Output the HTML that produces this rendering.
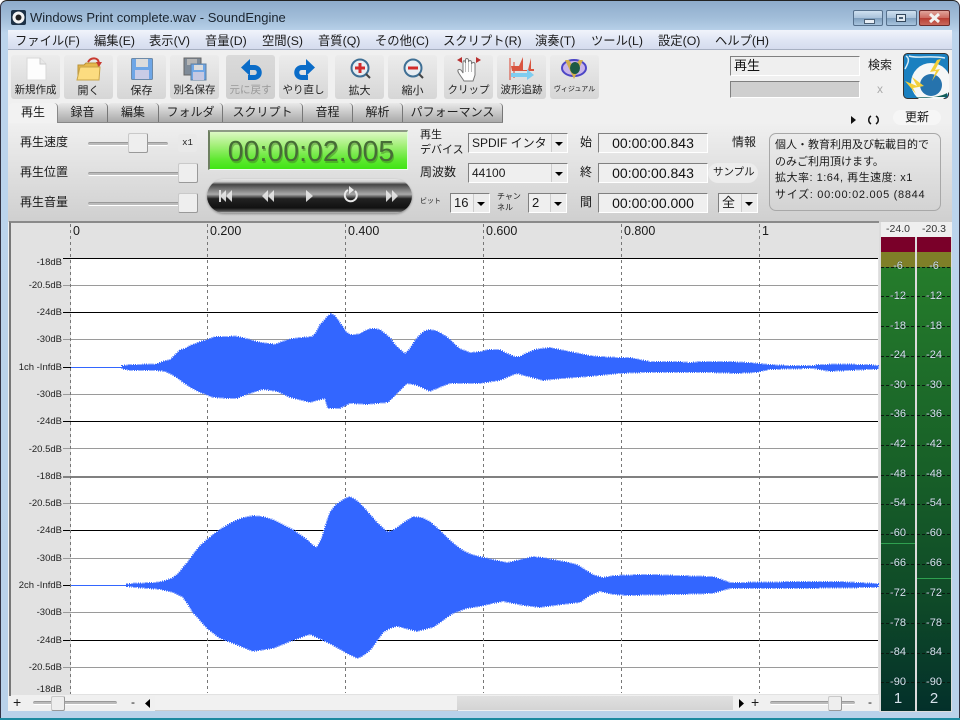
<!DOCTYPE html>
<html lang="ja"><head><meta charset="utf-8"><title>SoundEngine</title>
<style>
html,body{margin:0;padding:0;background:#fff}
#w{position:relative;width:960px;height:720px;overflow:hidden;font-family:"Liberation Sans","Noto Sans CJK JP",sans-serif;color:#1a1a1a;font-size:12px}
#w div,#w span.t{position:absolute}
.t{position:absolute;white-space:nowrap;line-height:16px;height:16px}
.mn{top:33px;font-size:12.3px}
.btn{top:55px;width:49px;height:44px;border-radius:3px;background:linear-gradient(#ececec,#d6d6d6)}
.lb{top:82px;text-align:center;font-size:10.5px;color:#222}
.tab{top:103px;height:19px;border-radius:4px 4px 0 0;background:linear-gradient(#e9e9e9,#a9a9a9);border-right:1px solid #777;box-sizing:border-box;text-align:center;line-height:19px;color:#222}
.sl{height:2px;background:#bbb;border-bottom:1px solid #fff;border-top:1px solid #999;border-radius:2px}
.th{background:#eee;border:1px solid #c9c9c9;border-right-color:#999;border-bottom-color:#999;border-radius:2px;box-sizing:border-box}
.sel{background:#efefef;border:1px solid;border-color:#808080 #fff #fff #808080;box-sizing:border-box;line-height:18px;padding-left:3px;white-space:nowrap;overflow:hidden}
.ar{right:0;top:0;bottom:0;width:15px;background:#ececec;border-left:1px solid #ccc}
.ar:after{content:"";position:absolute;left:3px;top:8px;border:4px solid transparent;border-top:4px solid #000;border-bottom:0}
.tm{left:598px;width:110px;height:20px;background:#efefef;border:1px solid;border-color:#808080 #fff #fff #808080;box-sizing:border-box;text-align:center;font-size:14px;line-height:18px;color:#111}
.db{left:10px;width:52px;text-align:right;font-size:9.5px;color:#222}
.m{width:36px;text-align:center;font-size:11px;color:#d5e5ea;text-shadow:0 0 1px #123}
</style></head><body>
<div id="w">
<div style="left:0;top:0;width:960px;height:720px;border-radius:7px 7px 0 0;background:linear-gradient(#8eabcb 0,#a3bfda 18px,#bcd4ec 32px,#b9d2ea 100%);border-top:1px solid #222;border-left:1px solid #334;border-right:1px solid #334;box-sizing:border-box"></div>
<div style="left:0;top:718px;width:960px;height:2px;background:#1d8aa0"></div>
<svg style="position:absolute;left:11px;top:10px" width="15" height="15" viewBox="0 0 15 15"><rect x="0" y="0" width="15" height="15" rx="2" fill="#1c3146"/><circle cx="7.5" cy="7.5" r="6" fill="#f3f3f3"/><circle cx="7.5" cy="7.5" r="3" fill="#222"/></svg>
<span class="t" style="left:30px;top:10px;font-size:13px;color:#1b2530">Windows Print complete.wav - SoundEngine</span>
<div style="left:853px;top:10px;width:30px;height:16px;border:1px solid #56708c;box-sizing:border-box;border-radius:2px;background:linear-gradient(#cfe0f0 0,#a9c2da 50%,#7f9fbe 51%,#a8c4de 100%)"></div>
<div style="left:864px;top:19px;width:9px;height:3px;background:#e8eef5;border:1px solid #4a5f75"></div>
<div style="left:886px;top:10px;width:31px;height:16px;border:1px solid #56708c;box-sizing:border-box;border-radius:2px;background:linear-gradient(#cfe0f0 0,#a9c2da 50%,#7f9fbe 51%,#a8c4de 100%)"></div>
<div style="left:896px;top:14px;width:10px;height:8px;border:1px solid #33475c;background:#dfe8f0;box-sizing:border-box"></div>
<div style="left:899px;top:17px;width:4px;height:2px;background:#4a5f75"></div>
<div style="left:919px;top:10px;width:31px;height:16px;border:1px solid #6d2b2b;box-sizing:border-box;border-radius:2px;background:linear-gradient(#e0a49c 0,#cc6a60 50%,#b83d33 51%,#c9685c 100%)"></div>
<svg style="position:absolute;left:928px;top:13px" width="13" height="10" viewBox="0 0 13 10"><path d="M2 1L11 9M11 1L2 9" stroke="#f2f2f2" stroke-width="3"/></svg>

<div style="left:8px;top:30px;width:944px;height:681px;background:#f0f0f0"></div>
<div style="left:8px;top:30px;width:944px;height:20px;background:linear-gradient(#f1f4fb,#dfe5f4 55%,#d5dcee);border-bottom:1px solid #a7b0c2;box-sizing:border-box"></div>
<span class="t mn" style="left:15px">ファイル(F)</span>
<span class="t mn" style="left:94px">編集(E)</span>
<span class="t mn" style="left:149px">表示(V)</span>
<span class="t mn" style="left:205px">音量(D)</span>
<span class="t mn" style="left:262px">空間(S)</span>
<span class="t mn" style="left:318px">音質(Q)</span>
<span class="t mn" style="left:375px">その他(C)</span>
<span class="t mn" style="left:443px">スクリプト(R)</span>
<span class="t mn" style="left:535px">演奏(T)</span>
<span class="t mn" style="left:591px">ツール(L)</span>
<span class="t mn" style="left:658px">設定(O)</span>
<span class="t mn" style="left:715px">ヘルプ(H)</span>

<div class="btn" style="left:11px"></div><div class="btn" style="left:64px"></div><div class="btn" style="left:117px"></div><div class="btn" style="left:170px"></div>
<div class="btn" style="left:226px;background:linear-gradient(#dadada,#cfcfcf)"></div><div class="btn" style="left:279px"></div><div class="btn" style="left:335px"></div><div class="btn" style="left:388px"></div><div class="btn" style="left:444px"></div><div class="btn" style="left:497px"></div><div class="btn" style="left:550px"></div>

<svg style="position:absolute;left:0;top:50px" width="620" height="50" viewBox="0 50 620 50">
<path d="M27 58H40L46 64V80H27Z" fill="#fdfdfd" stroke="#d8d8d8"/><path d="M40 58V64H46" fill="#e8e8e8" stroke="#ccc"/>
<path d="M78 80V65H84L86 63H98V80Z" fill="#e6b84c" stroke="#b89238"/><path d="M77 80L80 67H100L99 80Z" fill="#fcdc80" stroke="#c9a448"/><path d="M88 62C91 57 98 57 99 63" fill="none" stroke="#c83a30" stroke-width="2"/><path d="M96 62L102 62L99 67Z" fill="#c83a30"/>
<rect x="131.500" y="58.500" width="21" height="21" rx="1" fill="#6ea6e6" stroke="#6d8aa8"/><rect x="136" y="59" width="12" height="8" fill="#dcdcdc"/><rect x="135" y="70" width="14" height="9" fill="#c9cce6"/>
<rect x="184" y="58" width="17" height="17" fill="#7f8b98" stroke="#666"/><rect x="187" y="59" width="10" height="6" fill="#b5b5b5"/>
<rect x="191" y="64" width="15" height="16" fill="#6ea6e6" stroke="#5f7f9f"/><rect x="194" y="65" width="9" height="5" fill="#dcdcdc"/><rect x="193" y="72" width="11" height="8" fill="#c5c8e2"/>
<path d="M249 67.500H254C261 67.500 261 77.500 254 77.500H248" fill="none" stroke="#0a6cc8" stroke-width="5"/><path d="M250 59L241 67.500L250 76Z" fill="#0a6cc8"/>
<path d="M307 67.500H302C295 67.500 295 77.500 302 77.500H308" fill="none" stroke="#0a6cc8" stroke-width="5"/><path d="M306 59L315 67.500L306 76Z" fill="#0a6cc8"/>
<circle cx="360" cy="68" r="8.5" fill="#e8edf2" stroke="#3f6f94" stroke-width="2"/><path d="M355 68H365M360 63V73" stroke="#d22a2a" stroke-width="3"/><path d="M366 74L370 78" stroke="#444" stroke-width="2"/>
<circle cx="413" cy="68" r="8.5" fill="#e8edf2" stroke="#3f6f94" stroke-width="2"/><path d="M408 68H418" stroke="#d22a2a" stroke-width="3"/><path d="M419 74L423 78" stroke="#444" stroke-width="2"/>
<path d="M464 81C461 76 457 72 458 70C460 68 462 71 463 73V63C463 60 465 60 465.500 63V60C465.500 58 468 58 468.500 60V62C469 60 471 60 471.500 62V64C472 62 475 62 475 64V75L473 81Z" fill="#fdfdfd" stroke="#777"/>
<path d="M465.500 63V72M468.500 62V72M471.500 64V72" stroke="#bbb"/>
<path d="M457 60L462 57V63ZM481 60L476 57V63Z" fill="#b83030"/>
<path d="M510 58V80M514 62V78" stroke="#d9432f"/><path d="M511 66H519L523 57V70H528L531 58V69H534V71H512Z" fill="#d9543f"/><path d="M511 73H527V69L534 75L527 80V77H511Z" fill="#7fcdf0"/>
<ellipse cx="574" cy="68" rx="12" ry="8" fill="#c9b5e8" stroke="#4c46c6" stroke-width="2"/><path d="M565 60L574 79L583 60L579 60L574 68L569 60Z" fill="#d2b04c"/><ellipse cx="575" cy="68" rx="5" ry="6" fill="#1c5a44"/>
</svg>
<span class="t lb" style="left:11px;width:49px">新規作成</span>
<span class="t lb" style="left:64px;width:49px;font-size:11px;top:83px">開く</span>
<span class="t lb" style="left:117px;width:49px;font-size:11px;top:83px">保存</span>
<span class="t lb" style="left:170px;width:49px">別名保存</span>
<span class="t lb" style="left:226px;width:49px;color:#999">元に戻す</span>
<span class="t lb" style="left:279px;width:49px">やり直し</span>
<span class="t lb" style="left:335px;width:49px;font-size:11px;top:83px">拡大</span>
<span class="t lb" style="left:388px;width:49px;font-size:11px;top:83px">縮小</span>
<span class="t lb" style="left:444px;width:49px">クリップ</span>
<span class="t lb" style="left:497px;width:49px">波形追跡</span>
<span class="t lb" style="left:550px;width:49px;font-size:7px">ヴィジュアル</span>

<div class="sel" style="left:730px;top:56px;width:130px;height:20px;font-size:13px;color:#111">再生</div>
<span class="t" style="left:868px;top:57px">検索</span>
<div class="sel" style="left:730px;top:81px;width:130px;height:17px;background:#cfcfcf"></div>
<span class="t" style="left:877px;top:81px;color:#aaa">x</span>
<svg style="position:absolute;left:903px;top:53px" width="46" height="46" viewBox="0 0 46 46"><rect x=".5" y=".5" width="45" height="45" rx="4" fill="#1a80c0" stroke="#333"/><path d="M3 3C8 6 4 12 2 16M6 3C14 6 26 2 42 5" fill="none" stroke="#d8ecf5" stroke-width="1.500"/><circle cx="28" cy="30" r="20" fill="#f5f7f7"/><path d="M2 34L45 34V45H2Z" fill="#1a80c0" opacity=".0"/><circle cx="28" cy="32" r="11" fill="#2673ad"/><path d="M12 44H44V40C38 44 20 46 12 44Z" fill="#14605a"/><path d="M38 6L32 17L37 16L29 28L33 18L27 19L34 7Z" fill="#f3cf3a"/><path d="M2 28L14 33L9 24L21 33L10 35L13 41Z" fill="#f3cf3a"/></svg>

<div class="tab" style="left:58px;width:50px">録音</div>
<div class="tab" style="left:108px;width:51px">編集</div>
<div class="tab" style="left:159px;width:64px">フォルダ</div>
<div class="tab" style="left:223px;width:80px">スクリプト</div>
<div class="tab" style="left:303px;width:50px">音程</div>
<div class="tab" style="left:353px;width:50px">解析</div>
<div class="tab" style="left:403px;width:100px">パフォーマンス</div>

<div style="left:8px;top:122px;width:944px;height:100px;background:linear-gradient(#f0f0f0,#cfcfcf)"></div>
<div style="left:9px;top:103px;width:49px;height:20px;border-radius:4px 4px 0 0;background:#f2f2f2;border-right:1px solid #888;box-sizing:border-box;text-align:center;line-height:19px">再生</div>
<div style="left:58px;top:122px;width:445px;height:1px;background:#888"></div>
<svg style="position:absolute;left:849px;top:114px" width="30" height="11"><path d="M2 2L7 6L2 10Z" fill="#111"/><path d="M22 2C19 4 19 8 22 10M27 2C30 4 30 8 27 10" fill="none" stroke="#111" stroke-width="1.5"/></svg>
<div style="left:893px;top:110px;width:48px;height:15px;border-radius:8px;background:#f6f6f6"></div>
<span class="t" style="left:905px;top:109px;font-size:12px">更新</span>

<span class="t" style="left:20px;top:134px">再生速度</span>
<span class="t" style="left:20px;top:164px">再生位置</span>
<span class="t" style="left:20px;top:194px">再生音量</span>
<div class="sl" style="left:88px;top:142px;width:80px"></div><div class="th" style="left:128px;top:133px;width:20px;height:20px"></div>
<div class="sl" style="left:88px;top:172px;width:92px"></div><div class="th" style="left:178px;top:163px;width:20px;height:20px"></div>
<div class="sl" style="left:88px;top:202px;width:92px"></div><div class="th" style="left:178px;top:193px;width:20px;height:20px"></div>
<div style="left:178px;top:134px;width:19px;height:18px;background:#e9e9e9;border-radius:3px"></div>
<span class="t" style="left:178px;width:19px;text-align:center;top:135px;font:9px/16px 'Liberation Mono',monospace">x1</span>

<div style="left:208px;top:130px;width:200px;height:40px;box-sizing:border-box;border-top:2px solid #8d9a85;border-left:2px solid #6d7f60;border-right:1px solid #dfd;border-bottom:1px solid #efe;background:linear-gradient(#dcf8c4 0,#a6f07c 35%,#5ee830 75%,#3fe514 100%)"></div>
<span class="t" style="left:211px;width:200px;text-align:center;top:136px;height:32px;line-height:32px;font-size:28.5px;color:#466c36;text-shadow:1px 2px 0 rgba(60,120,30,.45)">00:00:02.005</span>

<div style="left:207px;top:179px;width:205px;height:34px;border-radius:17px;box-shadow:0 1px 2px #888;background:linear-gradient(#e8e8e8 0,#ccc 8%,#444 16%,#777 30%,#aaa 45%,#222 58%,#111 85%,#555 95%,#ccc 100%)"></div>
<svg style="position:absolute;left:207px;top:179px" width="205" height="34" viewBox="207 179 205 34">
<g fill="#e8e8e8" opacity=".9"><path d="M219 190H221V202H219ZM232 190V202L226 196ZM226 190V202L220 196Z"/><path d="M274 190V202L268 196ZM268 190V202L262 196Z"/><path d="M306 190L313 196L306 202Z"/><path d="M386 190L392 196L386 202ZM392 190L398 196L392 202Z"/></g>
<path d="M348 190A6 6 0 1 0 355 191" fill="none" stroke="#e8e8e8" stroke-width="2"/><path d="M349 186V194L354 190Z" fill="#e8e8e8"/>
</svg>

<span class="t" style="left:420px;top:127px;font-size:11px">再生</span>
<span class="t" style="left:420px;top:142px;font-size:11px">デバイス</span>
<span class="t" style="left:420px;top:164px;font-size:12px">周波数</span>
<span class="t" style="left:420px;top:194px;font-size:7px">ビット</span>
<span class="t" style="left:497px;top:189px;font-size:8px">チャン</span>
<span class="t" style="left:497px;top:200px;font-size:8px">ネル</span>
<div class="sel" style="left:468px;top:133px;width:100px;height:20px;font-size:12px">SPDIF インタ<div class="ar"></div></div>
<div class="sel" style="left:468px;top:163px;width:100px;height:20px;font-size:12px">44100<div class="ar"></div></div>
<div class="sel" style="left:450px;top:193px;width:40px;height:20px;font-size:13px">16<div class="ar"></div></div>
<div class="sel" style="left:528px;top:193px;width:39px;height:20px;font-size:13px">2<div class="ar"></div></div>
<span class="t" style="left:580px;top:134px">始</span>
<span class="t" style="left:580px;top:164px">終</span>
<span class="t" style="left:580px;top:194px">間</span>
<div class="tm" style="top:133px">00:00:00.843</div>
<div class="tm" style="top:163px">00:00:00.843</div>
<div class="tm" style="top:193px">00:00:00.000</div>
<span class="t" style="left:732px;top:134px">情報</span>
<div style="left:708px;top:163px;width:50px;height:20px;border-radius:10px;background:#ececec"></div>
<span class="t" style="left:713px;top:164px;font-size:10.5px">サンプル</span>
<div class="sel" style="left:718px;top:193px;width:40px;height:20px;font-size:13px">全<div class="ar"></div></div>
<div style="left:769px;top:133px;width:172px;height:78px;border:1px solid #a8a8a8;border-radius:7px;box-sizing:border-box"></div>
<span class="t" style="left:775px;top:137px;font-size:11px">個人・教育利用及び転載目的で</span>
<span class="t" style="left:775px;top:154px;font-size:11px">のみご利用頂けます。</span>
<span class="t" style="left:775px;top:170px;font-size:11px;letter-spacing:.5px">拡大率: 1:64, 再生速度: x1</span>
<span class="t" style="left:775px;top:187px;font-size:11px;letter-spacing:.7px">サイズ: 00:00:02.005 (8844</span>

<div style="left:9px;top:221px;width:870px;height:475px;background:#e2e2e2;border-left:2px solid #777;border-top:2px solid #8a8a8a;box-sizing:border-box"></div>

<svg style="position:absolute;left:0;top:0" width="960" height="720" viewBox="0 0 960 720">
<rect x="71" y="258" width="807" height="436" fill="#fff"/>
<g fill="#000" shape-rendering="crispEdges"><rect x="63" y="258" width="815" height="1"/><rect x="63" y="312" width="815" height="1"/><rect x="63" y="421" width="815" height="1"/><rect x="63" y="530" width="815" height="1"/><rect x="63" y="640" width="815" height="1"/><rect x="63" y="367" width="8" height="1"/><rect x="63" y="585" width="8" height="1"/></g>
<g fill="#9a9a9a" shape-rendering="crispEdges"><rect x="63" y="285" width="815" height="1"/><rect x="63" y="339" width="815" height="1"/><rect x="63" y="394" width="815" height="1"/><rect x="63" y="448" width="815" height="1"/><rect x="63" y="503" width="815" height="1"/><rect x="63" y="558" width="815" height="1"/><rect x="63" y="612" width="815" height="1"/><rect x="63" y="667" width="815" height="1"/></g>
<rect x="63" y="476" width="815" height="2" fill="#808080" shape-rendering="crispEdges"/>
<g stroke="#777" stroke-dasharray="3 3" shape-rendering="crispEdges"><path d="M70.5 224V694M207.5 224V693M345.5 224V693M483.5 224V693M621.5 224V693M759.5 224V693"/></g>
<rect x="71" y="367" width="52" height="1" fill="#3366ff"/>
<rect x="71" y="585" width="57" height="1" fill="#3366ff"/>
<polygon fill="#3366ff" stroke="#3366ff" stroke-width="2" stroke-dasharray="1 1.2" shape-rendering="crispEdges" points="122,366 130,365 155,364.5 160,363 165,361 170,360 175,355 180,350 185,349 190,346 195,344 200,342 207,340 215,337 225,337 235,336.5 243,338 250,340 257,342 265,343.5 275,344.5 285,341 292,339 300,338 312,337 316,333 320,325 324,321 327,317 331,314 335,316 339,322 342,326 346,332 350,335 355,335 360,334 365,331 370,329 376,329 380,330 385,334 390,338 395,345 400,350 405,354 410,349 415,341 420,335 425,331 430,330 436,331 440,333 445,336 450,340 455,345 460,349 470,353 480,352 488,350 500,350 505,353 510,355 515,357 520,357 525,354 530,352 535,350 540,349 550,348 555,349 560,350 570,352 580,354 590,356 600,357 620,358 630,358 640,360 650,362 680,362 690,363 700,362 730,362 750,363 760,364 770,365 790,366 815,366 817,365 840,364.5 870,365 878,366 878,369 870,369 830,371 813,368 770,369 757,372 737,373 707,372 647,372 620,373 590,376 563,378 543,380 527,376 517,373 500,380 480,383 450,383 442,386 430,391 417,385 407,383 397,393 388,402 367,404 350,403 340,408 328,408 325,398 310,402 290,397 277,391 263,389 250,393 237,398 227,398 213,397 200,392 192,388 183,382 178,378 173,375 165,371 155,370 130,370 122,368.5"/>
<polygon fill="#3366ff" stroke="#3366ff" stroke-width="2" stroke-dasharray="1 1.2" shape-rendering="crispEdges" points="127,584.5 135,583.5 155,583 165,581 173,578 178,574 183,568 188,562 193,555 200,546 207,540 213,535 220,530 226,526 233,522 243,518 253,516 263,517 273,520 283,525 293,530 300,535 307,540 312,545 317,548 322,538 326,525 330,513 335,506 340,502 345,499 350,497 354,499 358,502 364,508 370,515 378,524 387,532 392,531 397,528 405,522 413,517 422,518 430,522 438,529 447,538 455,545 463,551 472,555 480,557 493,560 507,563 520,560 533,557 543,558 553,560 565,562 577,565 585,570 593,575 603,578 613,576 640,575 653,575 680,576 713,577 722,580 730,583 800,582 840,582 878,584 878,587 800,588 730,588 713,593 680,594 627,595 613,594 600,591 590,595 580,602 563,604 540,607 523,605 503,601 493,603 480,606 467,608 453,613 443,620 433,627 417,631 397,626 390,628 383,632 376,642 370,650 362,656 357,658 347,653 333,645 323,640 310,634 293,640 273,648 253,651 233,643 220,638 207,628 200,620 193,612 188,604 183,597 173,592 160,589 135,587 127,586"/>
</svg>

<span class="t" style="left:73px;top:223px;font-size:12.5px">0</span>
<span class="t" style="left:210px;top:223px;font-size:12.5px">0.200</span>
<span class="t" style="left:348px;top:223px;font-size:12.5px">0.400</span>
<span class="t" style="left:486px;top:223px;font-size:12.5px">0.600</span>
<span class="t" style="left:624px;top:223px;font-size:12.5px">0.800</span>
<span class="t" style="left:762px;top:223px;font-size:12.5px">1</span>

<span class="t db" style="top:255px">-18dB</span><span class="t db" style="top:278px">-20.5dB</span><span class="t db" style="top:305px">-24dB</span><span class="t db" style="top:332px">-30dB</span><span class="t db" style="top:360px">1ch -InfdB</span><span class="t db" style="top:387px">-30dB</span><span class="t db" style="top:414px">-24dB</span><span class="t db" style="top:442px">-20.5dB</span><span class="t db" style="top:469px">-18dB</span><span class="t db" style="top:496px">-20.5dB</span><span class="t db" style="top:523px">-24dB</span><span class="t db" style="top:551px">-30dB</span><span class="t db" style="top:578px">2ch -InfdB</span><span class="t db" style="top:605px">-30dB</span><span class="t db" style="top:633px">-24dB</span><span class="t db" style="top:660px">-20.5dB</span><span class="t db" style="top:682px">-18dB</span>

<div style="left:11px;top:695px;width:868px;height:16px;background:#f0f0f0"></div>
<div style="left:155px;top:696px;width:302px;height:14px;background:#f1f1f1;border-right:1px solid #aaa;border-bottom:1px solid #ccc"></div>
<div style="left:457px;top:696px;width:276px;height:14px;background:linear-gradient(#e0e0e0,#d4d4d4)"></div>
<span class="t" style="left:13px;top:694px;font-size:14px">+</span>
<div class="sl" style="left:33px;top:701px;width:84px"></div><div class="th" style="left:51px;top:696px;width:14px;height:15px"></div>
<span class="t" style="left:131px;top:694px;font-size:12px">-</span>
<svg style="position:absolute;left:144px;top:698px" width="8" height="11"><path d="M6 1V10L1 5.5Z" fill="#000"/></svg>
<svg style="position:absolute;left:737px;top:698px" width="8" height="11"><path d="M2 1V10L7 5.5Z" fill="#000"/></svg>
<span class="t" style="left:751px;top:694px;font-size:14px">+</span>
<div class="sl" style="left:770px;top:701px;width:85px"></div><div class="th" style="left:828px;top:696px;width:14px;height:15px"></div>
<span class="t" style="left:868px;top:694px;font-size:12px">-</span>

<div style="left:879px;top:222px;width:73px;height:490px;background:#dcdcdc"></div>
<div style="left:881px;top:222px;width:71px;height:15px;background:#efefef"></div>
<span class="t" style="left:880px;width:36px;text-align:center;top:221px;font-size:10.5px;color:#333">-24.0</span>
<span class="t" style="left:916px;width:36px;text-align:center;top:221px;font-size:10.5px;color:#333">-20.3</span>
<svg style="position:absolute;left:881px;top:237px" width="71" height="475" viewBox="881 237 71 475">
<defs><linearGradient id="g" x1="0" y1="0" x2="0" y2="1"><stop offset="0" stop-color="#257c2b"/><stop offset=".45" stop-color="#186028"/><stop offset=".75" stop-color="#0f4a28"/><stop offset="1" stop-color="#03302a"/></linearGradient></defs>
<rect x="881" y="237" width="34" height="15" fill="#7a0029"/><rect x="917" y="237" width="34" height="15" fill="#7a0029"/>
<rect x="881" y="252" width="34" height="15" fill="#7f7f28"/><rect x="917" y="252" width="34" height="15" fill="#7f7f28"/>
<rect x="881" y="267" width="34" height="444" fill="url(#g)"/><rect x="917" y="267" width="34" height="444" fill="url(#g)"/>
<g stroke="#0a1a10" stroke-dasharray="3 2" shape-rendering="crispEdges"><path d="M881 267.5H915M917 267.5H951M881 296.5H915M917 296.5H951M881 326.5H915M917 326.5H951M881 356.5H915M917 356.5H951M881 385.5H915M917 385.5H951M881 415.5H915M917 415.5H951M881 445.5H915M917 445.5H951M881 475.5H915M917 475.5H951M881 504.5H915M917 504.5H951M881 534.5H915M917 534.5H951M881 564.5H915M917 564.5H951M881 593.5H915M917 593.5H951M881 623.5H915M917 623.5H951M881 653.5H915M917 653.5H951M881 682.5H915M917 682.5H951"/></g>
<rect x="881" y="543" width="34" height="1" fill="#2fa050"/><rect x="917" y="578" width="34" height="1" fill="#2fa050"/>
</svg>
<span class="t m" style="left:880px;top:258px">-6</span><span class="t m" style="left:916px;top:258px">-6</span>
<span class="t m" style="left:880px;top:288px">-12</span><span class="t m" style="left:916px;top:288px">-12</span>
<span class="t m" style="left:880px;top:318px">-18</span><span class="t m" style="left:916px;top:318px">-18</span>
<span class="t m" style="left:880px;top:347px">-24</span><span class="t m" style="left:916px;top:347px">-24</span>
<span class="t m" style="left:880px;top:377px">-30</span><span class="t m" style="left:916px;top:377px">-30</span>
<span class="t m" style="left:880px;top:406px">-36</span><span class="t m" style="left:916px;top:406px">-36</span>
<span class="t m" style="left:880px;top:436px">-42</span><span class="t m" style="left:916px;top:436px">-42</span>
<span class="t m" style="left:880px;top:466px">-48</span><span class="t m" style="left:916px;top:466px">-48</span>
<span class="t m" style="left:880px;top:495px">-54</span><span class="t m" style="left:916px;top:495px">-54</span>
<span class="t m" style="left:880px;top:525px">-60</span><span class="t m" style="left:916px;top:525px">-60</span>
<span class="t m" style="left:880px;top:555px">-66</span><span class="t m" style="left:916px;top:555px">-66</span>
<span class="t m" style="left:880px;top:585px">-72</span><span class="t m" style="left:916px;top:585px">-72</span>
<span class="t m" style="left:880px;top:615px">-78</span><span class="t m" style="left:916px;top:615px">-78</span>
<span class="t m" style="left:880px;top:644px">-84</span><span class="t m" style="left:916px;top:644px">-84</span>
<span class="t m" style="left:880px;top:674px">-90</span><span class="t m" style="left:916px;top:674px">-90</span>
<span class="t m" style="left:880px;top:691px;font-size:15px">1</span><span class="t m" style="left:916px;top:691px;font-size:15px">2</span>
</div>
</body></html>
